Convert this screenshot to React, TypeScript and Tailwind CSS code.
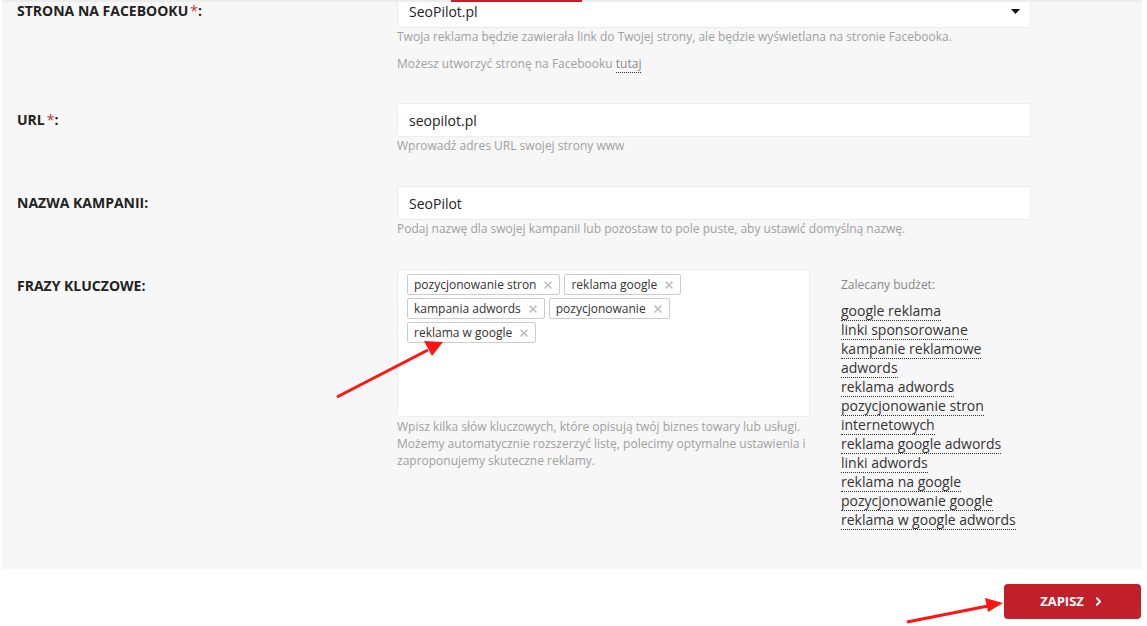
import React from "react";
import { ChevronRight, X } from "lucide-react";

const tags = [
  "pozycjonowanie stron",
  "reklama google",
  "kampania adwords",
  "pozycjonowanie",
  "reklama w google",
];

const budget = [
  "google reklama",
  "linki sponsorowane",
  "kampanie reklamowe",
  "adwords",
  "reklama adwords",
  "pozycjonowanie stron internetowych",
  "reklama google adwords",
  "linki adwords",
  "reklama na google",
  "pozycjonowanie google",
  "reklama w google adwords",
];

function Label({ text, req }: { text: string; req?: boolean }) {
  return (
    <div className="w-[380px] shrink-0 text-[14px] font-bold leading-[34px] text-[#222] uppercase">
      {text}
      {req && <span className="text-[#c9302c] font-normal ml-[2px]">*</span>}:
    </div>
  );
}

function Input({ value, select }: { value: string; select?: boolean }) {
  return (
    <div className="h-[34px] w-[634px] bg-white border border-[#ededed] rounded-[3px] flex items-center justify-between pl-[11px] pr-[10px] text-[14px] text-[#222]">
      <span>{value}</span>
      {select && (
        <svg width="9" height="5" viewBox="0 0 9 5">
          <path d="M0 0 L9 0 L4.5 5 Z" fill="#111" />
        </svg>
      )}
    </div>
  );
}

export default function App() {
  return (
    <div
      className="relative w-[1147px] h-[626px] overflow-hidden bg-white"
      style={{ fontFamily: '"Open Sans", "Noto Sans", sans-serif' }}
    >
      <div className="ml-[2px] w-[1140px] h-[569px] bg-[#f7f7f7] flex flex-col">
        <div className="relative z-10 h-[2px] bg-[#ececec] flex">
          <div className="ml-[449px] w-[131px] h-[2px] bg-[#c1202a]" />
        </div>
        <div className="pl-[15px] -mt-[8px] flex flex-col">
          {/* Row 1 */}
          <div className="flex">
            <Label text="Strona na Facebooku" req />
            <div className="flex flex-col">
              <Input value="SeoPilot.pl" select />
              <p className="text-[12px] leading-[18px] text-[#a0a0a0]">
                Twoja reklama będzie zawierała link do Twojej strony, ale będzie wyświetlana na stronie Facebooka.
              </p>
              <p className="mt-[9px] text-[12px] leading-[18px] text-[#a0a0a0]">
                Możesz utworzyć stronę na Facebooku{" "}
                <span className="border-b border-dotted border-[#333] text-[#888]">tutaj</span>
              </p>
            </div>
          </div>
          {/* Row 2 */}
          <div className="flex mt-[30px]">
            <Label text="URL" req />
            <div className="flex flex-col">
              <Input value="seopilot.pl" />
              <p className="text-[12px] leading-[18px] text-[#a0a0a0]">Wprowadź adres URL swojej strony www</p>
            </div>
          </div>
          {/* Row 3 */}
          <div className="flex mt-[31px]">
            <Label text="Nazwa kampanii" />
            <div className="flex flex-col">
              <Input value="SeoPilot" />
              <p className="text-[12px] leading-[18px] text-[#a0a0a0]">
                Podaj nazwę dla swojej kampanii lub pozostaw to pole puste, aby ustawić domyślną nazwę.
              </p>
            </div>
          </div>
          {/* Row 4 */}
          <div className="flex mt-[31px]">
            <Label text="Frazy kluczowe" />
            <div className="flex gap-[31px]">
              <div className="w-[413px] flex flex-col">
                <div className="h-[148px] bg-white border border-[#ededed] rounded-[3px] pl-[9px] pr-[80px] pt-[4px] flex flex-wrap content-start gap-x-[4px] gap-y-[3px]">
                  {tags.map((t) => (
                    <span
                      key={t}
                      className="h-[21px] flex items-center border border-[#cccccc] rounded-[2px] pl-[6px] pr-[5px] text-[12px] text-[#333] bg-white"
                    >
                      {t}
                      <X size={12} strokeWidth={3} className="ml-[6px] text-[#bbbbbb]" />
                    </span>
                  ))}
                </div>
                <p className="mt-[1px] text-[12px] leading-[17px] text-[#a0a0a0] pr-[2px]">
                  Wpisz kilka słów kluczowych, które opisują twój biznes towary lub usługi. Możemy automatycznie rozszerzyć listę, polecimy optymalne ustawienia i zaproponujemy skuteczne reklamy.
                </p>
              </div>
              <div className="w-[190px] flex flex-col pt-[7px]">
                <div className="text-[12px] leading-[18px] text-[#888]">Zalecany budżet:</div>
                <div className="mt-[7px] text-[14px] leading-[19px] text-[#333]">
                  {budget.map((b) => (
                    <div key={b}>
                      <span className="border-b border-dotted border-[#333]">{b}</span>
                    </div>
                  ))}
                </div>
              </div>
            </div>
          </div>
        </div>
      </div>
      <div className="flex justify-end pr-[6px] mt-[15px]">
        <button className="w-[137px] h-[35px] bg-[#c1202a] rounded-[4px] flex items-center justify-center gap-[8px] text-white text-[13px] font-bold">
          ZAPISZ
          <ChevronRight size={13} strokeWidth={3.5} />
        </button>
      </div>

      <svg className="absolute left-0 top-0 pointer-events-none" width="1147" height="626">
        <line x1="337" y1="397" x2="428" y2="350" stroke="#ff1414" strokeWidth="3" />
        <path d="M443 342 L424 341 L432 356 Z" fill="#ff1414" />
        <line x1="907" y1="622" x2="988" y2="606" stroke="#ff1414" strokeWidth="3" />
        <path d="M1003 603 L985 598 L988 612 Z" fill="#ff1414" />
      </svg>
    </div>
  );
}
